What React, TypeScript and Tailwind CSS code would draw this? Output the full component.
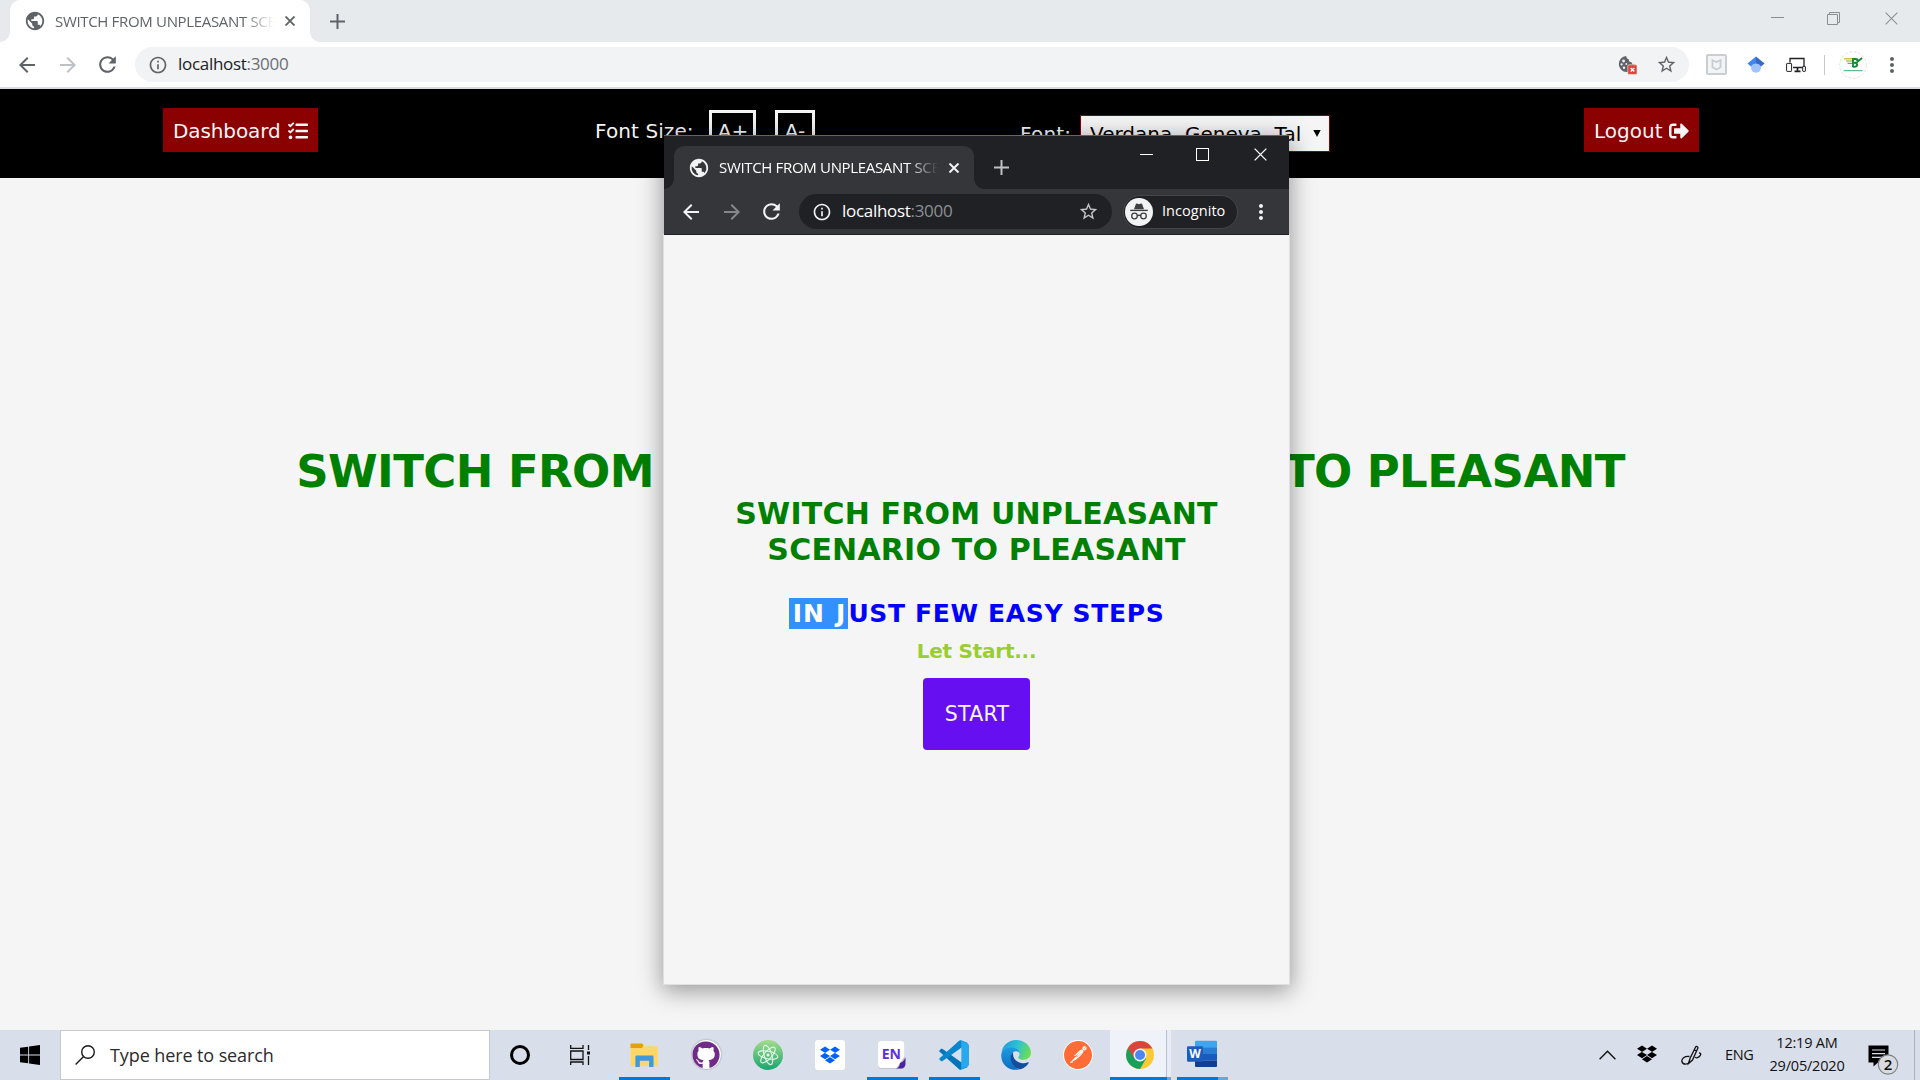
import React from "react";
import { FaDropbox, FaGithub, FaSignOutAlt, FaTasks } from "react-icons/fa";
import {
  MdArrowBack,
  MdArrowForward,
  MdInfoOutline,
  MdMoreVert,
  MdPublic,
  MdRefresh,
  MdStarBorder,
} from "react-icons/md";
import { SiPostman } from "react-icons/si";

const PAGE_TITLE = "SWITCH FROM UNPLEASANT SCENARIO TO PLEASANT";
const TAB_TITLE = "SWITCH FROM UNPLEASANT SCE";

function CloseGlyph({ size, stroke }: { size: number; stroke: number }) {
  return (
    <svg width={size} height={size} viewBox="0 0 10 10" stroke="currentColor" strokeWidth={stroke} className="shrink-0">
      <path d="M.5 .5l9 9M9.5 .5l-9 9" />
    </svg>
  );
}

function PlusGlyph() {
  return (
    <svg width="15" height="15" viewBox="0 0 15 15" stroke="currentColor" strokeWidth="2" className="shrink-0">
      <path d="M7.5 0v15M0 7.5h15" />
    </svg>
  );
}

function TabLabel() {
  return (
    <span className="block w-[219px] whitespace-nowrap text-[15px] leading-5 tracking-[-0.33px] [mask-image:linear-gradient(to_right,black_86%,transparent_100%)]">
      {TAB_TITLE}
    </span>
  );
}

function Address({ host, port }: { host: string; port: string }) {
  return (
    <span className="text-[17px] leading-5 tracking-[-0.3px]">
      <span className={host}>localhost</span>
      <span className={port}>:3000</span>
    </span>
  );
}

function IncognitoBadge() {
  return (
    <svg width="28" height="28" viewBox="0 0 28 28" className="shrink-0">
      <circle cx="14" cy="14" r="14" fill="#f1f3f4" />
      <path d="M9 11.2l1.8-5c.2-.6.8-.8 1.3-.6l1.9.6 1.9-.6c.5-.2 1.1 0 1.3.6l1.8 5z" fill="#3c4043" />
      <path d="M5.2 11.7h17.6v1.4H5.2z" fill="#3c4043" />
      <g fill="none" stroke="#3c4043" strokeWidth="1.3">
        <circle cx="9.5" cy="18" r="2.8" />
        <circle cx="18.5" cy="18" r="2.8" />
        <path d="M12.3 17.7q1.7-.9 3.4 0" />
      </g>
    </svg>
  );
}

function CookieBlocked() {
  return (
    <svg width="19" height="20" viewBox="0 0 19 20" className="shrink-0">
      <path d="M8.3 1a8 8 0 1 0 8.5 8.5c-1.6.4-3.2-.7-3.1-2.3-1.8.2-3.1-1-2.8-2.7C9.400 4.300 8.200 2.800 8.300 1z" fill="#5f6368" />
      <g fill="#f1f3f4">
        <circle cx="5.6" cy="6" r="1.4" />
        <circle cx="3.6" cy="9.4" r="1.1" />
        <circle cx="6" cy="12.8" r="1.2" />
        <circle cx="8.3" cy="9" r=".9" />
      </g>
      <rect x="9.8" y="9.800" width="9.2" height="9.600" rx="1" fill="#db4437" stroke="#f1f3f4" strokeWidth=".6" />
      <path d="M12.7 12.9l3.6 3.6M16.3 12.9l-3.6 3.6" stroke="#fff" strokeWidth="1.4" />
    </svg>
  );
}

function ShieldExtension() {
  return (
    <svg width="21" height="21" viewBox="0 0 21 21" className="shrink-0">
      <rect x="1" y="1" width="19" height="19" rx="1" fill="#f2f4f5" stroke="#c9ced2" strokeWidth="2" />
      <path d="M6.5 6.2l4 1.9 4-1.9v7l-4 2.3-4-2.3z" fill="none" stroke="#c9ced2" strokeWidth="1.8" />
    </svg>
  );
}

function ScholarExtension() {
  return (
    <svg width="18" height="18" viewBox="0 0 18 18" className="shrink-0">
      <circle cx="9" cy="11.8" r="5" fill="#a0c3ff" />
      <path d="M9 .6L.4 7.4l3.6 3A5.6 5.6 0 0 1 9 7.6z" fill="#4285f4" />
      <path d="M9 .6l8.6 6.8-3.6 3A5.6 5.6 0 0 0 9 7.6z" fill="#356ac3" />
    </svg>
  );
}

function DevicesExtension() {
  return (
    <svg width="20" height="16" viewBox="0 0 20 16" fill="none" stroke="#202124" strokeWidth="1" className="shrink-0">
      <path d="M4 5.500V1.500h14v9H7" strokeWidth="1.300" />
      <rect x=".6" y="6.400" width="5" height="8" rx=".6" fill="#fff" />
      <rect x="16.700" y="9.400" width="2.700" height="5" rx=".5" fill="#fff" />
      <path d="M8.500 14.300h6M11.500 11v3" strokeWidth="1.700" />
    </svg>
  );
}

function ProfileAvatar() {
  return (
    <svg width="28" height="28" viewBox="0 0 28 28" className="shrink-0">
      <circle cx="14" cy="14" r="13.3" fill="#fff" stroke="#dadce0" strokeWidth=".8" strokeDasharray="3 1.5" />
      <path d="M5 7.800h9" stroke="#d4b62c" strokeWidth="1.3" />
      <path d="M7 10h7M8.500 12.300h5" stroke="#8aa62c" strokeWidth="1.200" />
      <path d="M14 16.300V8h2.800c2.500 0 2.500 3.700 0 3.700H15c4.200 0 4.200 4.200 0 4.200h-1M17.500 8.800l2 1.100 3.600-2.900" fill="none" stroke="#138a36" strokeWidth="1.900" />
      <path d="M4.600 19.600h19" stroke="#5fb98a" strokeWidth="1.200" />
    </svg>
  );
}

function MainBrowserChrome() {
  return (
    <header className="font-['Open_Sans',sans-serif]">
      <div className="flex h-[42px] items-end bg-[#e7eaed]">
        <span className="size-[10px] bg-[radial-gradient(circle_at_0_0,transparent_9.5px,#fff_10px)]" />
        <div className="flex h-[42px] w-[300px] items-center rounded-t-[10px] bg-white pl-[14px] text-[#5f6368]">
          <MdPublic size={22} className="shrink-0" />
          <div className="-mt-px ml-[9px]">
            <TabLabel />
          </div>
          <span className="ml-[11px]">
            <CloseGlyph size={10} stroke={1.9} />
          </span>
        </div>
        <span className="size-[10px] bg-[radial-gradient(circle_at_100%_0,transparent_9.5px,#fff_10px)]" />
        <span className="mb-[13.5px] ml-[10px] text-[#5f6368]">
          <PlusGlyph />
        </span>
        <div className="mb-[17px] ml-auto mr-[22px] flex items-center text-[#8b8d90]">
          <span className="mb-[2px] mr-[43px] h-px w-[13px] bg-[#8b8d90]" />
          <svg width="13" height="13" viewBox="0 0 13 13" fill="none" stroke="currentColor" className="mr-[45px]">
            <path d="M.5 2.5h10v10H.5zM2.5 2.5v-2h10v10h-2" />
          </svg>
          <CloseGlyph size={13} stroke={0.8} />
        </div>
      </div>
      <div className="flex h-[45px] items-center bg-white text-[#5f6368]">
        <MdArrowBack size={24} className="ml-[15px]" />
        <MdArrowForward size={24} className="ml-[17px] text-[#bdc1c6]" />
        <MdRefresh size={25} className="ml-[15px]" />
        <div className="ml-[15px] flex h-[35px] w-[1554px] items-center rounded-full bg-[#f1f3f4] pl-[13px]">
          <MdInfoOutline size={20} />
          <span className="-mt-px ml-[10px]">
            <Address host="text-[#202124]" port="text-[#6b6f74]" />
          </span>
          <span className="ml-auto mr-[19px]">
            <CookieBlocked />
          </span>
          <MdStarBorder size={21} className="mr-3" />
        </div>
        <span className="ml-[17px]">
          <ShieldExtension />
        </span>
        <span className="ml-[20px]">
          <ScholarExtension />
        </span>
        <span className="ml-[21px]">
          <DevicesExtension />
        </span>
        <span className="ml-[18px] h-5 w-px bg-[#c6c9cc]" />
        <span className="ml-[14px]">
          <ProfileAvatar />
        </span>
        <MdMoreVert size={24} className="ml-[13px]" />
      </div>
      <div className="h-[2px] bg-[#dadce0]" />
    </header>
  );
}

function SiteNav() {
  return (
    <nav className="flex h-[89px] items-start bg-black text-[20px] leading-[44px] text-[#f5f5f5]">
      <button className="ml-[163px] mt-[19px] flex h-[44px] w-[155px] items-center whitespace-nowrap bg-[#8b0000] pl-[10px] pt-px">
        <span className="tracking-[-0.1px]">Dashboard</span>
        <FaTasks size={20} className="ml-[7px] shrink-0" />
      </button>
      <div className="ml-[277px] mt-[20px] flex w-[220px] whitespace-nowrap">
        <span className="w-[114px] tracking-[0.1px]">Font Size:</span>
        <button className="mt-px h-10 w-[47px] border-[3px] border-[#f5f5f5] pl-px leading-[36px]">A+</button>
        <button className="ml-[19px] mt-px h-10 w-10 border-[3px] border-[#f5f5f5] leading-[36px]">A-</button>
      </div>
      <label className="ml-[205px] mt-[22px] flex whitespace-nowrap">
        <span className="w-[60px] pt-px tracking-[0.2px]">Font:</span>
        <span className="mt-1 flex h-[37px] w-[250px] items-center border border-[#8b0000] bg-[#f5f5f5] pl-[9px] leading-[35px] text-black">
          <span className="pt-px">Verdana, Geneva, Tal</span>
          <svg width="8" height="7" viewBox="0 0 8 7" className="ml-auto mr-[8px]">
            <path d="M.3 0h7.4L4 7z" />
          </svg>
        </span>
      </label>
      <button className="ml-[254px] mt-[19px] flex h-[44px] w-[115px] items-center whitespace-nowrap bg-[#8b0000] pl-[10px] pt-px">
        <span>Logout</span>
        <FaSignOutAlt size={20} className="ml-[7px] shrink-0" />
      </button>
    </nav>
  );
}

function IncognitoWindow() {
  return (
    <section className="absolute left-[664px] top-[135px] w-[625px] shadow-[0_5px_22px_2px_rgba(0,0,0,0.38)]">
      <header className="relative border-t border-[#1a79bf] bg-[#35363a] font-['Open_Sans',sans-serif] text-[#f1f3f4]">
        <div className="flex h-[53px] items-end bg-[#202124]">
          <span className="size-[10px] bg-[radial-gradient(circle_at_0_0,transparent_9.5px,#35363a_10px)]" />
          <div className="flex h-[43px] w-[300px] items-center rounded-t-[10px] bg-[#35363a] pl-[14px]">
            <MdPublic size={22} className="shrink-0" />
            <div className="-mt-[2px] ml-[9px] text-white">
              <TabLabel />
            </div>
            <span className="ml-[11px]">
              <CloseGlyph size={10} stroke={2} />
            </span>
          </div>
          <span className="size-[10px] bg-[radial-gradient(circle_at_100%_0,transparent_9.5px,#35363a_10px)]" />
          <span className="mb-[14px] ml-[10px] text-[#bdc1c6]">
            <PlusGlyph />
          </span>
          <div className="mb-[28px] ml-auto mr-[22px] flex items-center text-white">
            <span className="mr-[43px] h-px w-[13px] bg-white" />
            <span className="mr-[45px] size-[13px] border border-white" />
            <CloseGlyph size={13} stroke={1} />
          </div>
        </div>
        <div className="flex h-[45px] items-center">
          <MdArrowBack size={24} className="ml-[15px]" />
          <MdArrowForward size={24} className="ml-[17px] text-[#85878a]" />
          <MdRefresh size={25} className="ml-[15px]" />
          <div className="ml-[15px] flex h-[35px] w-[313px] items-center rounded-full bg-[#202124] pl-[13px]">
            <MdInfoOutline size={20} />
            <span className="-mt-px ml-[10px]">
              <Address host="text-white" port="text-[#8d9094]" />
            </span>
            <MdStarBorder size={21} className="ml-auto mr-[13px] text-[#c4c7ca]" />
          </div>
          <div className="ml-[11px] flex h-[34px] w-[115px] items-center rounded-full border border-[#44464a] bg-[#202124] pl-px">
            <IncognitoBadge />
            <span className="-mt-[2px] ml-[9px] text-[14.5px] font-medium leading-5 tracking-[0.05px] text-white">Incognito</span>
          </div>
          <MdMoreVert size={24} className="ml-[11px]" />
        </div>
        <div className="h-px bg-[#202124]" />
      </header>
      <div className="flex h-[749px] flex-col items-center bg-[#f5f5f5] pt-[261px] text-center shadow-[0_0_0_1px_#e0e0e0]">
        <h1 className="text-[30px] font-bold leading-9 tracking-[0.2px] text-[#008000]">
          SWITCH FROM UNPLEASANT
          <br />
          SCENARIO TO PLEASANT
        </h1>
        <h2 className="mt-[31px] whitespace-nowrap text-[25px] font-bold leading-[30px] tracking-[0.65px] text-[#0000ff]">
          <span className="bg-[#3390ff] pb-px pl-[4px] pr-[2px] pt-px tracking-[1px] text-white [word-spacing:1.5px]">IN J</span>
          UST FEW EASY STEPS
        </h2>
        <p className="mt-[10px] text-[20px] font-bold leading-6 tracking-[-0.25px] text-[#9acd32]">Let Start...</p>
        <button className="mt-[15px] h-[72px] w-[107px] rounded-[4px] bg-[#6610f2] pl-px text-[20.5px] leading-[73px] tracking-[0.3px] text-[#f5f5f5]">
          START
        </button>
      </div>
    </section>
  );
}

function FileExplorerIcon() {
  return (
    <svg width="28" height="24" viewBox="0 0 28 24">
      <path d="M.5 1h11l1.5 2.3H27a.8.8 0 0 1 .8.8V22.500a.8.8 0 0 1-.8.8H1.300a.8.8 0 0 1-.8-.8z" fill="#ffd766" />
      <path d="M.5 1.200C.5.600.9.400 1.300.400h10.200c.6 0 1.200.4 1.500.9L13.400 3l-1.500 1.900H.5z" fill="#e2a208" />
      <path d="M5.400 23.900V13.800c0-.8.5-1.300 1.300-1.300h15.500c.8 0 1.300.5 1.300 1.300v10.100h-4.400v-6.100H9.800v6.100z" fill="#3c9add" />
    </svg>
  );
}

function GithubDesktopIcon() {
  return (
    <span className="flex size-[29px] items-center justify-center rounded-full bg-white shadow-[0_0_2px_rgba(0,0,0,0.4)]">
      <FaGithub size={28} className="text-[#6f2b87]" />
    </span>
  );
}

function AtomIcon() {
  return (
    <svg width="30" height="30" viewBox="0 0 30 30">
      <defs>
        <linearGradient id="atom" x1="0" y1="0" x2="0" y2="1">
          <stop offset="0" stopColor="#a5dc8d" />
          <stop offset="1" stopColor="#18a56f" />
        </linearGradient>
      </defs>
      <circle cx="15" cy="15" r="15" fill="url(#atom)" />
      <g fill="none" stroke="#e3f6e6" strokeWidth="1.1">
        <ellipse cx="15" cy="15" rx="10" ry="3.8" transform="rotate(12 15 15)" />
        <ellipse cx="15" cy="15" rx="10" ry="3.8" transform="rotate(72 15 15)" />
        <ellipse cx="15" cy="15" rx="10" ry="3.8" transform="rotate(132 15 15)" />
      </g>
      <circle cx="15" cy="15" r="1.5" fill="#f0fbf2" />
    </svg>
  );
}

function DropboxTile() {
  return (
    <span className="flex size-[30px] items-center justify-center rounded-[3px] bg-white">
      <FaDropbox size={20} className="text-[#0061fe]" />
    </span>
  );
}

function EndNoteIcon() {
  return (
    <svg width="30" height="30" viewBox="0 0 30 30">
      <rect x="1" y="1" width="27" height="28" rx="3.5" fill="#bfc4d0" />
      <path d="M4 1h20.500A3 3 0 0 1 27.500 4v12.500L19.500 28H4.300A3.300 3.300 0 0 1 1 25V4a3 3 0 0 1 3-3z" fill="#fff" />
      <path d="M28.500 17.500v6.500a4.500 4.500 0 0 1-4.500 4.500h-5c3-1 3.500-2.500 4-5.500 2.500-.5 4-2.500 5.500-5.500z" fill="#4a23a0" />
      <text x="14.300" y="19" textAnchor="middle" fontFamily="Open Sans, sans-serif" fontWeight="700" fontSize="14" fill="#5b2fe0">
        EN
      </text>
    </svg>
  );
}

function VsCodeIcon() {
  return (
    <svg width="30" height="30" viewBox="0 0 30 30">
      <path d="M.6 10.300L2 9c.5-.4 1.1-.4 1.6 0L29 27l-7 2.700a1.800 1.800 0 0 1-1.900-.4L.6 11.700a1 1 0 0 1 0-1.400z" fill="#0075b7" />
      <path d="M.6 19.700L2 21c.5.4 1.1.4 1.6 0L29 3 22 .3a1.800 1.800 0 0 0-1.900.4L.6 18.300a1 1 0 0 0 0 1.400z" fill="#0a86cf" />
      <path d="M21.800 29.600a2 2 0 0 1-1.300-.2c.8.4 1.700-.1 1.700-1V1.600c0-.9-.9-1.400-1.700-1 .4-.3.9-.3 1.300-.1l7 3.300c.7.3 1.200 1 1.200 1.700v19c0 .8-.5 1.400-1.200 1.700z" fill="#27a9f1" />
      <path d="M22.200 8.300v13.400L13.500 15z" fill="#d8deeb" />
    </svg>
  );
}

function EdgeIcon() {
  return (
    <svg width="30" height="30" viewBox="0 0 30 30">
      <defs>
        <linearGradient id="edgeTop" x1="0" y1=".3" x2="1" y2=".6">
          <stop offset="0" stopColor="#1f9de0" />
          <stop offset=".5" stopColor="#2fc2d0" />
          <stop offset="1" stopColor="#6ee04a" />
        </linearGradient>
        <linearGradient id="edgeMid" x1="0" y1="0" x2="0" y2="1">
          <stop offset="0" stopColor="#1b9be2" />
          <stop offset="1" stopColor="#0f6cc0" />
        </linearGradient>
      </defs>
      <path d="M.5 13C1.300 5.500 7.400 0 15 0c8.500 0 15 6 15 12.600 0 4.300-3.300 7.200-7.200 7.200-3.800 0-5.600-1.400-5.600-2.400 0-.8 1.300-1.400 1.300-3.400C18.500 10.500 15 8 10.500 8 5.500 8 2 10.500.5 13z" fill="url(#edgeTop)" />
      <path d="M.3 14C1.500 9.500 6 7.500 10.500 7.500c5 0 8 3 8 6-.6-1.700-2.200-2.500-4-2.300C11.500 11.500 9.500 14.500 10 19c.6 5 4.500 9 8.500 10.500C8.500 31.500-.8 24.500.3 14z" fill="url(#edgeMid)" />
      <path d="M12.300 12.200C9.500 14 8.800 17.500 10 21c1.600 4.800 6 8.500 9.500 8.200 3.700-1 6.500-3.300 8.200-6.200.3-.6-.2-1-.8-.7-2.200 1-4.400 1.200-6.900.7-5.500-1-9-6-7.700-10.800z" fill="#0f4f9e" />
    </svg>
  );
}

function PostmanIcon() {
  return (
    <span className="flex size-[30px] items-center justify-center rounded-full bg-white">
      <SiPostman size={28} className="text-[#ff6c37]" />
    </span>
  );
}

function ChromeIcon() {
  return (
    <svg width="28" height="28" viewBox="0 0 28 28">
      <circle cx="14" cy="14" r="14" fill="#fcc934" />
      <path d="M14 14L1.900 7A14 14 0 0 0 14 28l6.100-10.500z" fill="#17a05d" />
      <path d="M14 7.500h12.400A14 14 0 0 0 1.900 7l6.400 10.500z" fill="#d9453c" />
      <circle cx="14" cy="14" r="6.5" fill="#f1f3f6" />
      <circle cx="14" cy="14" r="5" fill="#4c86f0" />
    </svg>
  );
}

function WordIcon() {
  return (
    <svg width="30" height="28" viewBox="0 0 30 28">
      <path d="M8 1.500A1 1 0 0 1 9 .7h20a1 1 0 0 1 1 1v6H8z" fill="#41a5ee" />
      <path d="M8 7.400h22v6.600H8z" fill="#2b7cd3" />
      <path d="M8 14h22v6.600H8z" fill="#185abd" />
      <path d="M8 20.600h22V26a1 1 0 0 1-1 1H9a1 1 0 0 1-1-1z" fill="#103f91" />
      <rect x="0" y="6.200" width="16" height="15.500" rx="1.200" fill="#1b5cbe" />
      <text x="8" y="18.300" textAnchor="middle" fontFamily="Open Sans, sans-serif" fontWeight="700" fontSize="12" fill="#fff">
        W
      </text>
    </svg>
  );
}

function Slot({ children, running }: { children: React.ReactNode; running?: boolean }) {
  return (
    <div className="flex h-[50px] w-[62px] flex-col items-center">
      <span className="flex h-[47px] items-center pt-[2px]">{children}</span>
      {running && <span className="h-[3px] w-[51px] bg-[#0078d7]" />}
    </div>
  );
}

function Taskbar() {
  return (
    <footer className="flex h-[50px] bg-[#d8deea] font-['Open_Sans',sans-serif] text-[#111]">
      <div className="flex w-[60px] items-center justify-center">
        <svg width="20" height="20" viewBox="0 0 20 20">
          <path d="M0 2.800l8.200-1.100v7.800H0zM9.100 1.500L20 0v9.500H9.100zM0 10.400h8.200v7.900L0 17.200zM9.100 10.400H20V20L9.100 18.500z" />
        </svg>
      </div>
      <div className="flex w-[430px] items-center border border-[#c8c9cc] bg-white pl-[14px]">
        <svg width="21" height="20" viewBox="0 0 21 20" fill="none" stroke="#1a1a1a" strokeWidth="1.4">
          <circle cx="13" cy="7" r="6.3" />
          <path d="M8.600 11.500L.6 19.500" />
        </svg>
        <span className="ml-[14px] text-[18px] leading-6 tracking-[-0.1px] text-[#2b2b2b]">Type here to search</span>
      </div>
      <div className="flex w-[60px] items-center justify-center">
        <span className="size-[20px] rounded-full border-[3px] border-black" />
      </div>
      <div className="flex w-[63px] items-center pl-[20px]">
        <svg width="20" height="20" viewBox="0 0 20 20" fill="none" stroke="#111" strokeWidth="1.3">
          <path d="M.7 0v3.400h12.300V0M.7 6h12.300v8.500H.7zM.7 20v-3h12.300v3M18.500 0v5M18.500 11v9" />
          <path d="M17 6.500h3v3h-3z" fill="#111" stroke="none" />
        </svg>
      </div>
      <Slot running>
        <FileExplorerIcon />
      </Slot>
      <Slot>
        <GithubDesktopIcon />
      </Slot>
      <Slot>
        <AtomIcon />
      </Slot>
      <Slot>
        <DropboxTile />
      </Slot>
      <Slot running>
        <EndNoteIcon />
      </Slot>
      <Slot running>
        <VsCodeIcon />
      </Slot>
      <Slot>
        <EdgeIcon />
      </Slot>
      <Slot>
        <PostmanIcon />
      </Slot>
      <div className="ml-px flex w-[61px]">
        <div className="flex w-[57px] flex-col items-center border-r border-[#b7bfd0] bg-[#eff2f8]">
          <span className="flex h-[47px] items-center pl-[3px] pt-[2px]">
            <ChromeIcon />
          </span>
          <span className="h-[3px] w-[57px] bg-[#0078d7]" />
        </div>
        <div className="flex w-1 items-end bg-[#e8ecf4]">
          <span className="h-[3px] w-full bg-[#62a8e2]" />
        </div>
      </div>
      <div className="flex w-[62px] flex-col">
        <span className="flex h-[47px] items-center pl-[16px] pt-px">
          <WordIcon />
        </span>
        <span className="ml-[6px] flex h-[3px] w-[51px]">
          <span className="w-[41px] bg-[#0078d7]" />
          <span className="w-[10px] bg-[#62a8e2]" />
        </span>
      </div>
      <div className="ml-auto flex items-center">
        <svg width="17" height="10" viewBox="0 0 17 10" fill="none" stroke="#111" strokeWidth="1.4">
          <path d="M.6 9.200l7.900-8 7.900 8" />
        </svg>
        <FaDropbox size={20} className="-mt-[2px] ml-[21px] text-black" />
        <svg width="21" height="21" viewBox="0 0 21 21" fill="none" stroke="#111" strokeWidth="1.3" className="ml-[24px]">
          <path d="M7.500 18.500L9 13.500 14.600 2c.6-1.100 2.800-.2 2.300 1.100L11.500 15zM13.200 4.800l2.600 1.200" />
          <path d="M8.500 11.500c-5-.7-8.200 2.200-7.600 5 .8 3.600 6.300 3.200 8.100 0M14 12c1 1.500 3.600 1 5.300-1.600.8-1.300.3-2.600-1.300-2.600" />
        </svg>
        <span className="ml-[23px] w-[28px] text-[14.5px] leading-5 tracking-[-0.3px]">ENG</span>
        <div className="-mt-px ml-[13px] flex w-[82px] flex-col items-center whitespace-nowrap text-[14.5px] leading-[22.5px] tracking-[-0.2px]">
          <span>12:19 AM</span>
          <span>29/05/2020</span>
        </div>
        <svg width="32" height="34" viewBox="0 0 32 34" className="ml-[20px] mt-[7px]">
          <path d="M.5 3.500h20v17H10l-4.500 4v-4h-5z" />
          <path d="M4 8h13M4 11.700h13M4 15.400h13" stroke="#d8deea" strokeWidth="1.2" />
          <circle cx="20" cy="22.500" r="9.700" fill="#d9dbe0" stroke="#7d8088" strokeWidth="1.2" />
          <text x="20" y="28" textAnchor="middle" fontFamily="Open Sans, sans-serif" fontWeight="600" fontSize="15" fill="#111">
            2
          </text>
        </svg>
        <span className="ml-[14px] h-[50px] w-px bg-[#a9afbd]" />
        <span className="w-[5px]" />
      </div>
    </footer>
  );
}

export default function App() {
  return (
    <div className="relative flex h-[1080px] w-[1920px] flex-col overflow-hidden bg-[#f5f5f5] font-['DejaVu_Sans',sans-serif]">
      <MainBrowserChrome />
      <SiteNav />
      <main className="flex flex-1 justify-center pt-[267px]">
        <h1 className="whitespace-nowrap pl-px text-[45px] font-bold leading-[54px] tracking-[-0.59px] text-[#008000]">{PAGE_TITLE}</h1>
      </main>
      <IncognitoWindow />
      <div className="relative">
        <Taskbar />
      </div>
    </div>
  );
}
